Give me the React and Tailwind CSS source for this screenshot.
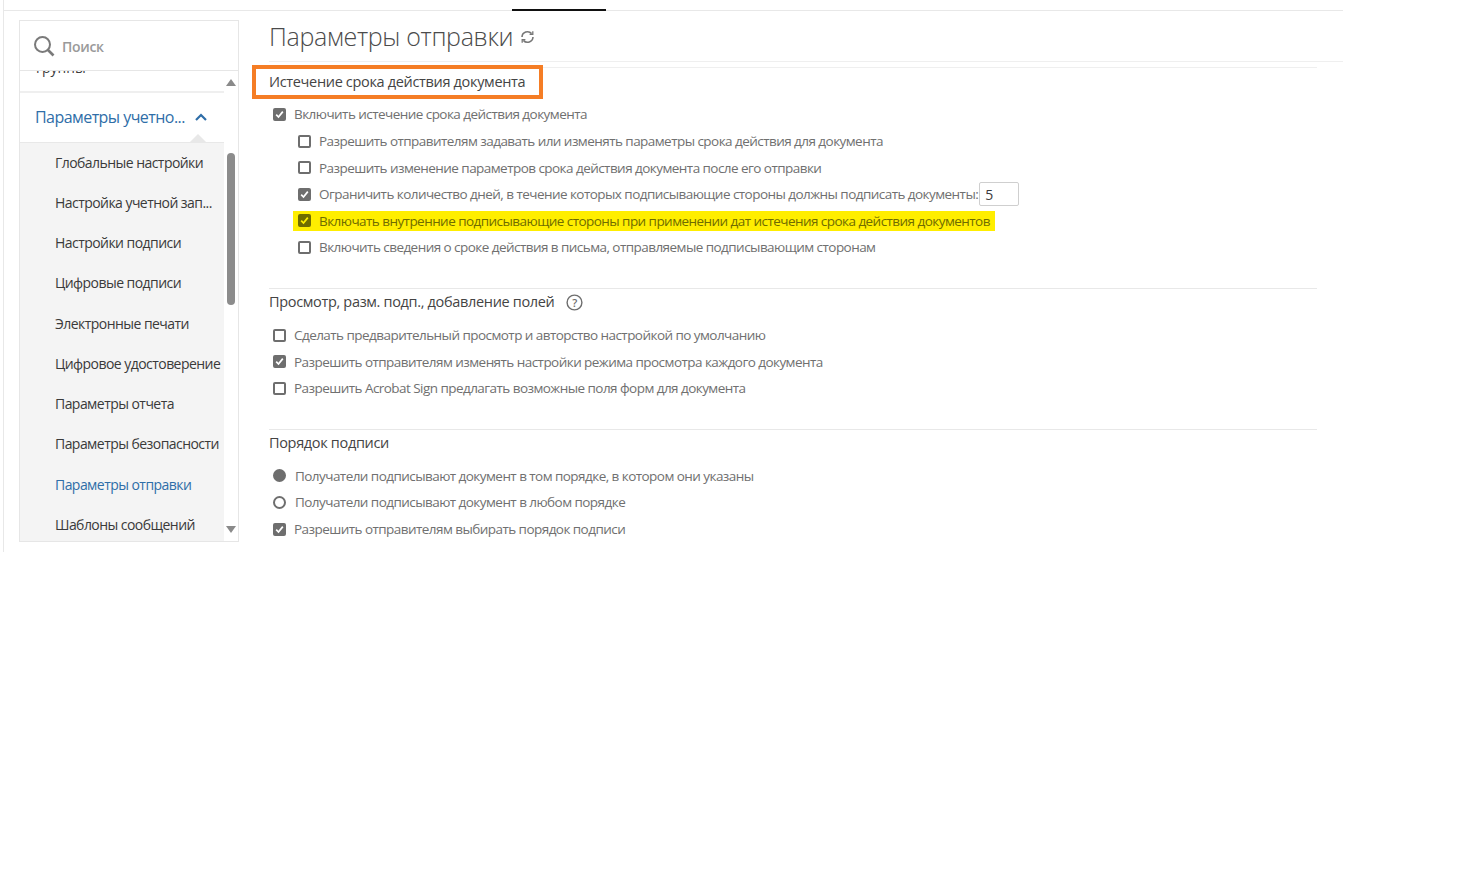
import React from "react";

const Check = ({ checked, on }) => (
  <span className={`flex h-[13px] w-[13px] shrink-0 items-center justify-center rounded-[2px] border-2 ${on ? "border-[#6f6c00]" : "border-[#6e6e6e]"} ${checked ? (on ? "bg-[#6f6c00]" : "bg-[#6e6e6e]") : "bg-white"}`}>
    {checked && (
      <svg width="9" height="9" viewBox="0 0 9 9" fill="none" stroke={on ? "#ffee00" : "#fff"} strokeWidth="1.7">
        <path d="M1.2 4.6 3.5 7 7.8 1.6" />
      </svg>
    )}
  </span>
);

const Row = ({ checked, children, nested, tail }) => (
  <div className={`flex h-[26.6px] items-center gap-[8px] ${nested ? "pl-[29px]" : "pl-[4px]"}`}>
    <Check checked={checked} />
    <span className="whitespace-nowrap text-[13.5px] tracking-[-0.55px] text-[#707070]">{children}</span>
    {tail}
  </div>
);

const Radio = ({ checked, children }) => (
  <div className="flex h-[26.6px] items-center gap-[9px] pl-[4px]">
    <span className={`h-[13px] w-[13px] shrink-0 rounded-full border-2 border-[#6e6e6e] ${checked ? "bg-[#6e6e6e]" : "bg-white"}`} />
    <span className="whitespace-nowrap text-[13.5px] tracking-[-0.55px] text-[#707070]">{children}</span>
  </div>
);

const SectionTitle = ({ children, extra }) => (
  <div className="flex items-center gap-[11px] text-[14.5px] font-medium tracking-[-0.33px] text-[#444444]">
    <span className="whitespace-nowrap">{children}</span>
    {extra}
  </div>
);

const menu = ["Глобальные настройки", "Настройка учетной зап...", "Настройки подписи", "Цифровые подписи", "Электронные печати", "Цифровое удостоверение", "Параметры отчета", "Параметры безопасности", "Параметры отправки", "Шаблоны сообщений"];

export default function App() {
  return (
    <div className="h-[878px] w-[1475px] overflow-hidden bg-white font-['Open_Sans','Noto_Sans',sans-serif]">
      <div className="ml-[3px] h-[552px] w-[1340px] border-l border-[#e8e8e8]">
        <div className="flex h-[11px] items-end border-b border-[#e8e8e8]">
          <div className="ml-[508px] h-[2px] w-[94px] translate-y-px bg-[#111]" />
        </div>
        <div className="flex pl-[15px] pt-[9px]">
          {/* sidebar */}
          <aside className="flex h-[522px] w-[220px] shrink-0 flex-col border border-[#e6e6e6]">
            <div className="flex h-[50px] shrink-0 items-center gap-[7px] border-b border-[#e6e6e6] pl-[13px]">
              <svg width="22" height="22" viewBox="0 0 22 22" fill="none" stroke="#7a7a7a" strokeWidth="2">
                <circle cx="9.5" cy="9.5" r="7.5" />
                <path d="m15 15 5.5 5.5" strokeWidth="2.6" />
              </svg>
              <span className="pt-[1px] text-[14px] font-semibold tracking-[-0.3px] text-[#9a9a9a]">Поиск</span>
            </div>
            <div className="flex min-h-0 flex-1">
              <div className="w-[204px] shrink-0 overflow-hidden">
                <div className="h-[22px] overflow-hidden border-b-2 border-[#efefef]">
                  <div className="-mt-[14px] pl-[16px] text-[14px] text-[#3c3c3c]">группы</div>
                </div>
                <div className="relative flex h-[50px] items-center justify-between border-b border-[#e8e8e8] pb-[2px] pl-[15px] pr-[17px]">
                  <span className="whitespace-nowrap text-[16px] tracking-[-0.55px] text-[#2f6ea8]">Параметры учетно...</span>
                  <svg width="12" height="8" viewBox="0 0 12 8" fill="none" stroke="#2f6ea8" strokeWidth="2.2">
                    <path d="M1 7 6 2l5 5" />
                  </svg>
                  <span className="absolute bottom-[-1px] right-[17px] h-0 w-0 border-x-[9px] border-b-[9px] border-x-transparent border-b-[#e8e8e8]" />
                </div>
                <div className="h-[399px] bg-[#f4f4f4] pl-[35px]">
                  <div className="-translate-y-[0.8px]">
                    {menu.map((m) => (
                      <div key={m} className={`flex h-[40.25px] items-center whitespace-nowrap text-[14px] tracking-[-0.55px] ${m === "Параметры отправки" ? "text-[#2f6ea8]" : "text-[#3a3a3a]"}`}>{m}</div>
                    ))}
                  </div>
                </div>
              </div>
              <div className="flex w-[15px] flex-col items-center pb-[8px] pt-[8px]">
                <span className="h-0 w-0 border-x-[5px] border-b-[7px] border-x-transparent border-b-[#8a8a8a]" />
                <span className="mt-[67px] h-[152px] w-[8px] rounded-full bg-[#8c8c8c]" />
                <span className="mt-auto h-0 w-0 border-x-[5px] border-t-[7px] border-x-transparent border-t-[#8a8a8a]" />
              </div>
            </div>
          </aside>
          {/* main */}
          <main className="ml-[30px] flex-1">
            <div className="flex h-[41px] items-start gap-[7px]">
              <h1 className="h-[32px] whitespace-nowrap text-[25px] font-light leading-[32px] tracking-[-0.32px] text-[#4b4b4b]">Параметры отправки</h1>
              <svg className="mt-[10px]" width="15" height="14" viewBox="0 0 15 14" fill="none" stroke="#777" strokeWidth="1.6">
                <path d="M2 7a5.5 5.5 0 0 1 9.6-3.4M13 7a5.5 5.5 0 0 1-9.6 3.4" />
                <path d="M12.8 1.2v3.2H9.6M2.2 12.8V9.6h3.2" strokeWidth="1.3" />
              </svg>
            </div>
            <div className="h-px bg-[#efefef]" />
            <div className="mt-[5px] w-[1048px] border-t border-[#efefef]" />
            <section className="relative w-[1048px]">
              <div className="pt-[3px]"><SectionTitle>Истечение срока действия документа</SectionTitle></div>
              <div className="pointer-events-none absolute left-[-17px] top-[-3px] h-[34px] w-[291px] border-4 border-[#f57d25]" />
              <div className="mt-[8.5px]">
                <Row checked>Включить истечение срока действия документа</Row>
                <Row nested>Разрешить отправителям задавать или изменять параметры срока действия для документа</Row>
                <Row nested>Разрешить изменение параметров срока действия документа после его отправки</Row>
                <Row nested checked tail={
                  <span className="-ml-[7px] flex h-[24px] w-[40px] items-center rounded-[2px] border border-[#cfcfcf] pl-[5px] text-[14px] text-[#3c3c3c]">5</span>
                }>Ограничить количество дней, в течение которых подписывающие стороны должны подписать документы:</Row>
                <div className="my-[3.3px] ml-[24px] flex h-[20px] w-[702px] items-center gap-[8px] bg-[#ffee00] pl-[5px]">
                  <Check checked on />
                  <span className="whitespace-nowrap text-[13.5px] tracking-[-0.55px] text-[#6f6c00]">Включать внутренние подписывающие стороны при применении дат истечения срока действия документов</span>
                </div>
                <Row nested>Включить сведения о сроке действия в письма, отправляемые подписывающим сторонам</Row>
              </div>
            </section>
            <section className="mt-[27.5px] w-[1048px] border-t border-[#e8e8e8] pt-[2px]">
              <SectionTitle extra={
                <svg width="17" height="17" viewBox="0 0 17 17" fill="none">
                  <circle cx="8.5" cy="8.5" r="7.4" stroke="#6e6e6e" strokeWidth="1.4" />
                  <text x="8.5" y="12.5" textAnchor="middle" fontSize="11" fontWeight="600" fill="#6e6e6e">?</text>
                </svg>
              }>Просмотр, разм. подп., добавление полей</SectionTitle>
              <div className="mt-[9px]">
                <Row>Сделать предварительный просмотр и авторство настройкой по умолчанию</Row>
                <Row checked>Разрешить отправителям изменять настройки режима просмотра каждого документа</Row>
                <Row>Разрешить Acrobat Sign предлагать возможные поля форм для документа</Row>
              </div>
            </section>
            <section className="mt-[27px] w-[1048px] border-t border-[#e8e8e8] pt-[2px]">
              <SectionTitle>Порядок подписи</SectionTitle>
              <div className="mt-[9px]">
                <Radio checked>Получатели подписывают документ в том порядке, в котором они указаны</Radio>
                <Radio>Получатели подписывают документ в любом порядке</Radio>
                <Row checked>Разрешить отправителям выбирать порядок подписи</Row>
              </div>
            </section>
          </main>
        </div>
      </div>
    </div>
  );
}
